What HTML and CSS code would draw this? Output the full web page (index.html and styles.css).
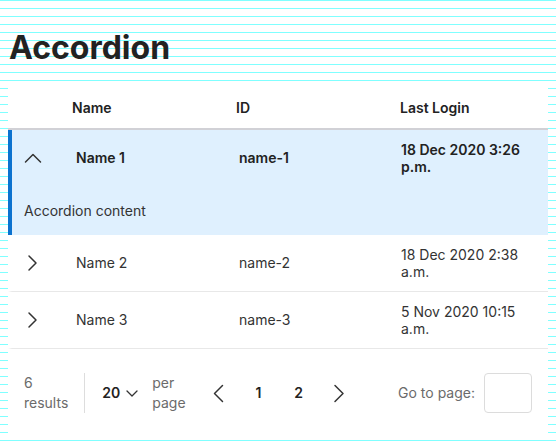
FILE: index.html
```html
<!DOCTYPE html>
<html lang="en">
<head>
<meta charset="utf-8">
<title>Accordion</title>
<link rel="stylesheet" href="styles.css">
</head>
<body>
<h1 class="title">Accordion</h1>
<div class="table">
  <div class="thead">
    <div></div>
    <div class="th">Name</div>
    <div class="th">ID</div>
    <div class="th">Last Login</div>
  </div>

  <div class="row expanded">
    <div class="row-main">
      <div class="cell-icon">
        <svg width="20" height="20" viewBox="0 0 20 20"><polyline points="2.5,14 10,6.5 17.5,14" /></svg>
      </div>
      <div class="cell">Name 1</div>
      <div class="cell">name-1</div>
      <div class="cell date">18 Dec 2020 3:26 p.m.</div>
    </div>
    <div class="row-content">Accordion content</div>
  </div>

  <div class="row">
    <div class="row-main">
      <div class="cell-icon">
        <svg width="20" height="20" viewBox="0 0 20 20"><polyline points="6,3 13,10 6,17" /></svg>
      </div>
      <div class="cell">Name 2</div>
      <div class="cell">name-2</div>
      <div class="cell date">18 Dec 2020 2:38 a.m.</div>
    </div>
  </div>

  <div class="row">
    <div class="row-main">
      <div class="cell-icon">
        <svg width="20" height="20" viewBox="0 0 20 20"><polyline points="6,3 13,10 6,17" /></svg>
      </div>
      <div class="cell">Name 3</div>
      <div class="cell">name-3</div>
      <div class="cell date">5 Nov 2020 10:15 a.m.</div>
    </div>
  </div>

  <div class="footer">
    <div class="muted wrap">6 results</div>
    <div class="divider"></div>
    <div class="per-select">
      <span class="strong">20</span>
      <svg width="14" height="14" viewBox="0 0 14 14"><polyline points="2,5 7,10 12,5" /></svg>
    </div>
    <div class="muted wrap per">per page</div>
    <div class="pager">
      <div class="pbtn">
        <svg width="20" height="20" viewBox="0 0 20 20"><polyline points="13.5,2.5 5.5,10.5 13.5,18.5" /></svg>
      </div>
      <div class="pbtn strong">1</div>
      <div class="pbtn strong">2</div>
      <div class="pbtn">
        <svg width="20" height="20" viewBox="0 0 20 20"><polyline points="6,2.5 14,10.5 6,18.5" /></svg>
      </div>
    </div>
    <div class="muted goto">Go to page:</div>
    <div class="page-input"></div>
  </div>
</div>
</body>
</html>
```

FILE: styles.css
```css
html {
  background-color: #ffffff;
  background-image: repeating-linear-gradient(to bottom, #80ffff 0px, #80ffff 1px, transparent 1px, transparent 8px);
}

body {
  margin: 8px;
  font-family: Inter, "Noto Sans", sans-serif;
  font-size: 14px;
  color: #333333;
}

.title {
  margin: 20px 0 13px 1px;
  font-size: 32px;
  line-height: 40px;
  font-weight: 700;
  color: #222222;
}

.table {
  background: #ffffff;
}

.thead {
  display: grid;
  grid-template-columns: 64px 164px 164px 1fr;
  padding: 17px 0 10px;
  line-height: 20px;
  border-bottom: 2px solid #d1d1d6;
}

.th {
  font-weight: 600;
  color: #222222;
}

.row {
  border-left: 4px solid transparent;
  border-bottom: 1px solid #e8e8e8;
}

.row.expanded {
  background: #dff0fe;
  border-left-color: #0b72cf;
  border-bottom: none;
}

.row-main {
  display: grid;
  grid-template-columns: 64px 163px 162px 1fr;
  align-items: center;
  height: 56px;
}

.expanded .row-main .cell {
  font-weight: 600;
  color: #222222;
}

.cell-icon {
  display: flex;
  align-items: center;
  padding-left: 11px;
}

.cell-icon svg,
.per-select svg,
.pbtn svg {
  fill: none;
  stroke: #333333;
  stroke-width: 1.5;
  stroke-linecap: round;
  stroke-linejoin: round;
}

.cell {
  line-height: 20px;
}

.cell.date {
  line-height: 17px;
  padding-right: 16px;
}

.row-content {
  padding: 15px 12px 14px;
  line-height: 20px;
}

.footer {
  display: flex;
  align-items: center;
  padding: 24px 16px 27px;
  line-height: 20px;
}

.muted {
  color: #6b6b6b;
}

.wrap {
  width: min-content;
}

.divider {
  width: 1px;
  height: 40px;
  background: #dddddd;
  margin-left: 16px;
}

.per-select {
  display: flex;
  align-items: center;
  margin-left: 17px;
  gap: 5px;
}

.per-select svg {
  stroke-width: 1.3;
}

.strong {
  font-weight: 600;
  color: #222222;
}

.per {
  margin-left: 13px;
}

.pager {
  display: flex;
  margin-left: 13px;
}

.pbtn {
  width: 40px;
  height: 40px;
  display: flex;
  align-items: center;
  justify-content: center;
}

.goto {
  margin-left: auto;
}

.page-input {
  width: 46px;
  height: 38px;
  margin-left: 9px;
  border: 1px solid #dcdcdc;
  border-radius: 4px;
  background: #ffffff;
}
```
